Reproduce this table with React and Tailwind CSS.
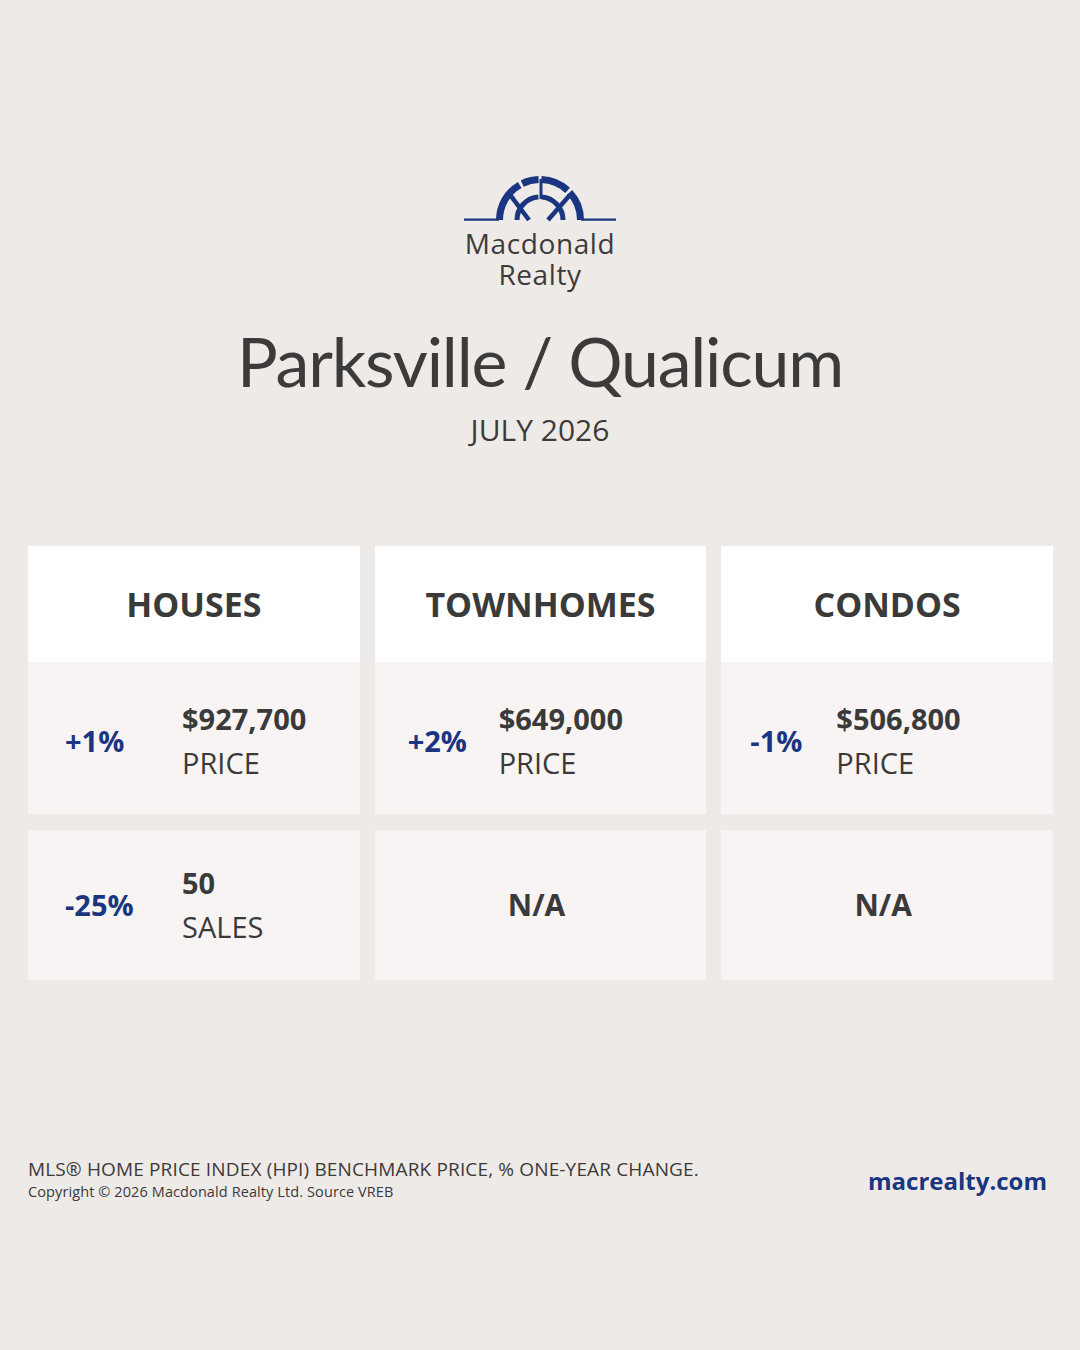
import React from "react";

const BLUE = "#1b3680";

function polar(cx, cy, r, deg) {
  const a = (deg * Math.PI) / 180;
  return [cx + r * Math.cos(a), cy - r * Math.sin(a)];
}
function arc(cx, cy, r, from, to) {
  const [x1, y1] = polar(cx, cy, r, from);
  const [x2, y2] = polar(cx, cy, r, to);
  return `M${x1.toFixed(2)} ${y1.toFixed(2)} A${r} ${r} 0 0 1 ${x2.toFixed(2)} ${y2.toFixed(2)}`;
}

function Emblem() {
  const cx = 77;
  const cy = 44;
  const outer = [
    [180, 120],
    [116, 92],
    [88, 47],
    [43, 0],
  ];
  const inner = [
    [180, 94],
    [86, 0],
  ];
  const [dlx, dly] = polar(cx, cy, 39, 140);
  const [drx, dry] = polar(cx, cy, 39, 40);
  return (
    <svg width="154" height="46" viewBox="0 0 154 46" className="block">
      <g fill="none" stroke={BLUE}>
        <line x1="1" y1="43.6" x2="36" y2="43.6" strokeWidth="2.4" />
        <line x1="118" y1="43.6" x2="153" y2="43.6" strokeWidth="2.4" />
        {outer.map(([a, b], i) => (
          <path key={"o" + i} d={arc(cx, cy, 40.5, a, b)} strokeWidth="7" />
        ))}
        {inner.map(([a, b], i) => (
          <path key={"i" + i} d={arc(cx, cy, 23, a, b)} strokeWidth="5" />
        ))}
        <line x1={dlx} y1={dly} x2="66" y2="44" strokeWidth="4.5" />
        <line x1={drx} y1={dry} x2="85" y2="44" strokeWidth="4.5" />
        <line x1="78" y1="3" x2="78" y2="23" strokeWidth="3" />
      </g>
    </svg>
  );
}

const cards = [
  {
    title: "HOUSES",
    pl: "pl-[37px]",
    w: "w-[117px]",
    price: { pct: "+1%", value: "$927,700" },
    sales: { pct: "-25%", value: "50" },
  },
  {
    title: "TOWNHOMES",
    pl: "pl-[33px]",
    w: "w-[91px]",
    price: { pct: "+2%", value: "$649,000" },
    sales: null,
  },
  {
    title: "CONDOS",
    pl: "pl-[29px]",
    w: "w-[86px]",
    price: { pct: "-1%", value: "$506,800" },
    sales: null,
  },
];

function StatRow({ pl, w, pct, value, label }) {
  return (
    <div className={`flex items-center ${pl}`}>
      <div className={`${w} shrink-0 text-[29px] leading-[44px] font-bold text-[#1b3680]`}>{pct}</div>
      <div className="flex flex-col text-[29px] leading-[44px] text-[#3b3a3a]">
        <span className="font-bold">{value}</span>
        <span className="font-normal">{label}</span>
      </div>
    </div>
  );
}

export default function App() {
  return (
    <div className="w-[1080px] h-[1350px] bg-[#eeeae7] flex flex-col items-center font-['Open_Sans',sans-serif] text-[#3b3a3a]">
      <div className="pt-[176px]">
        <Emblem />
      </div>
      <div className="mt-[6px] text-center text-[28px] leading-[31px] tracking-[0.6px] text-[#3d3b3a]">
        Macdonald
        <br />
        Realty
      </div>
      <h1 className="mt-[37px] font-['Lato',sans-serif] text-[68px] leading-none font-normal tracking-[-1.2px] text-[#3d3b3a] whitespace-nowrap">
        Parksville / Qualicum
      </h1>
      <div className="mt-[20px] text-[30px] leading-none text-[#3d3b3a]">JULY 2026</div>

      <div className="mt-[101px] w-full px-[28px] pr-[27px] grid grid-cols-3 gap-x-[15px]">
        {cards.map((c) => (
          <div key={c.title} className="flex flex-col">
            <div className="h-[116px] bg-white flex items-center justify-center text-[34px] font-bold text-[#3b3a3a]">
              {c.title}
            </div>
            <div className="h-[152px] bg-[#f7f4f3] flex flex-col justify-center pt-[6px]">
              <StatRow pl={c.pl} w={c.w} pct={c.price.pct} value={c.price.value} label="PRICE" />
            </div>
            <div className="mt-[16px] h-[150px] bg-[#f7f4f3] flex flex-col justify-center">
              {c.sales ? (
                <StatRow pl={c.pl} w={c.w} pct={c.sales.pct} value={c.sales.value} label="SALES" />
              ) : (
                <div className="text-center pr-[8px] text-[30px] leading-[44px] font-bold text-[#3b3a3a]">N/A</div>
              )}
            </div>
          </div>
        ))}
      </div>

      <div className="mt-[180px] w-full pl-[28px] pr-[33px] flex justify-between items-start">
        <div className="flex flex-col text-[#3b3a3a]">
          <span className="text-[19px] leading-none tracking-[0.15px]">MLS® HOME PRICE INDEX (HPI) BENCHMARK PRICE, % ONE-YEAR CHANGE.</span>
          <span className="mt-[6px] text-[14.5px] leading-none tracking-[0.1px]">Copyright © 2026 Macdonald Realty Ltd. Source VREB</span>
        </div>
        <div className="mt-[9px] text-[24px] leading-none font-bold text-[#1b3680]">macrealty.com</div>
      </div>
    </div>
  );
}
